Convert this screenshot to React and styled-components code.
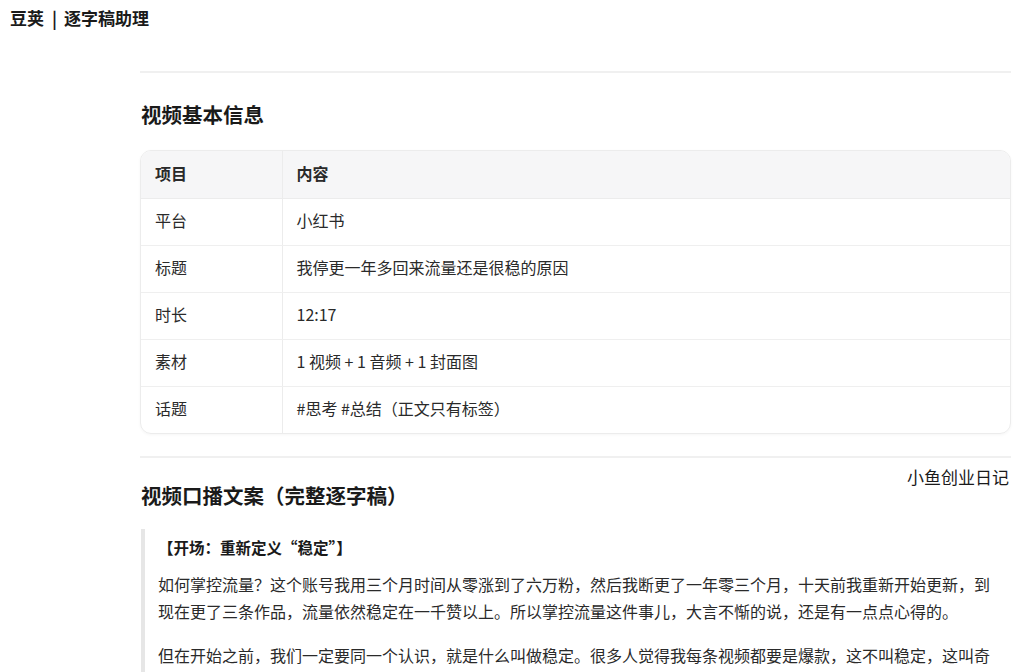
import React from "react";
import styled, { createGlobalStyle } from "styled-components";

const GlobalStyle = createGlobalStyle`
  html, body {
    margin: 0;
    padding: 0;
    background: #ffffff;
    font-family: "Noto Sans CJK SC", "Noto Sans", sans-serif;
    color: #222;
  }
  * { box-sizing: border-box; }
`;

const rows = [
  ["平台", "小红书"],
  ["标题", "我停更一年多回来流量还是很稳的原因"],
  ["时长", "12:17"],
  ["素材", "1 视频 + 1 音频 + 1 封面图"],
  ["话题", "#思考 #总结（正文只有标签）"],
];

const App = () => {
  return (
    <>
      <GlobalStyle />
      <Header>
        <Brand>
          豆荚<Sep>|</Sep>逐字稿助理
        </Brand>
      </Header>
      <Main>
        <Rule />
        <Heading>视频基本信息</Heading>
        <TableWrap>
          <Table>
            <thead>
              <tr>
                <Th>项目</Th>
                <Th>内容</Th>
              </tr>
            </thead>
            <tbody>
              {rows.map(([k, v]) => (
                <tr key={k}>
                  <Td>{k}</Td>
                  <Td>{v}</Td>
                </tr>
              ))}
            </tbody>
          </Table>
        </TableWrap>
        <Section>
          <Rule $gap={22} />
          <Watermark>小鱼创业日记</Watermark>
          <Heading $top={23} $bottom={20}>视频口播文案（完整逐字稿）</Heading>
          <Quote>
            <QuoteTitle>【开场：重新定义“稳定”】</QuoteTitle>
            <Para>
              如何掌控流量？这个账号我用三个月时间从零涨到了六万粉，然后我断更了一年零三个月，十天前我重新开始更新，到现在更了三条作品，流量依然稳定在一千赞以上。所以掌控流量这件事儿，大言不惭的说，还是有一点点心得的。
            </Para>
            <Para>
              但在开始之前，我们一定要同一个认识，就是什么叫做稳定。很多人觉得我每条视频都要是爆款，这不叫稳定，这叫奇迹。真正的稳定，是你每一条作品的数据都不会掉到一个底线以下。
            </Para>
          </Quote>
        </Section>
      </Main>
    </>
  );
};

const Header = styled.div`
  height: 36px;
  padding-left: 10px;
  display: flex;
  align-items: center;
`;

const Brand = styled.div`
  font-size: 17px;
  font-weight: 700;
  line-height: 36px;
  color: #1a1a1a;
`;

const Sep = styled.span`
  margin: 0 7px 0 8px;
`;

const Main = styled.div`
  margin-left: 140px;
  width: 871px;
  padding-top: 35px;
`;

const Section = styled.div`
  position: relative;
`;

const Rule = styled.div`
  height: 2px;
  background: #f0f0f0;
  margin-top: ${(p) => p.$gap || 0}px;
`;

const Heading = styled.h2`
  margin: ${(p) => p.$top ?? 27}px 0 ${(p) => p.$bottom ?? 22}px 1px;
  font-size: 20.5px;
  line-height: 28px;
  font-weight: 700;
  color: #1a1a1a;
`;

const Watermark = styled.div`
  position: absolute;
  right: 2px;
  top: 9px;
  font-size: 17px;
  line-height: 24px;
  color: #1a1a1a;
`;

const TableWrap = styled.div`
  border: 1px solid #ececec;
  border-radius: 11px;
  overflow: hidden;
  box-shadow: 0 1px 3px rgba(0, 0, 0, 0.04);
`;

const Table = styled.table`
  width: 100%;
  border-collapse: collapse;
  font-size: 16px;
  color: #2a2a2a;
  tr:last-child td {
    border-bottom: none;
  }
`;

const Th = styled.th`
  height: 47px;
  padding: 0 14px 3px;
  text-align: left;
  font-weight: 700;
  background: #f6f6f7;
  border-bottom: 1px solid #ececec;
  &:first-child {
    width: 141px;
    border-right: 1px solid #ececec;
  }
`;

const Td = styled.td`
  height: 47px;
  padding: 0 14px 3px;
  border-bottom: 1px solid #efefef;
  &:first-child {
    border-right: 1px solid #ececec;
  }
`;

const Quote = styled.div`
  border-left: 4px solid #e6e6e6;
  padding: 5px 8px 0 13px;
  margin-left: 1px;
`;

const QuoteTitle = styled.div`
  font-size: 15.5px;
  font-weight: 700;
  line-height: 27px;
  color: #1a1a1a;
  margin-bottom: 10px;
`;

const Para = styled.p`
  margin: 0 0 17px 0;
  font-size: 16px;
  line-height: 27px;
  color: #2a2a2a;
`;

export default App;
